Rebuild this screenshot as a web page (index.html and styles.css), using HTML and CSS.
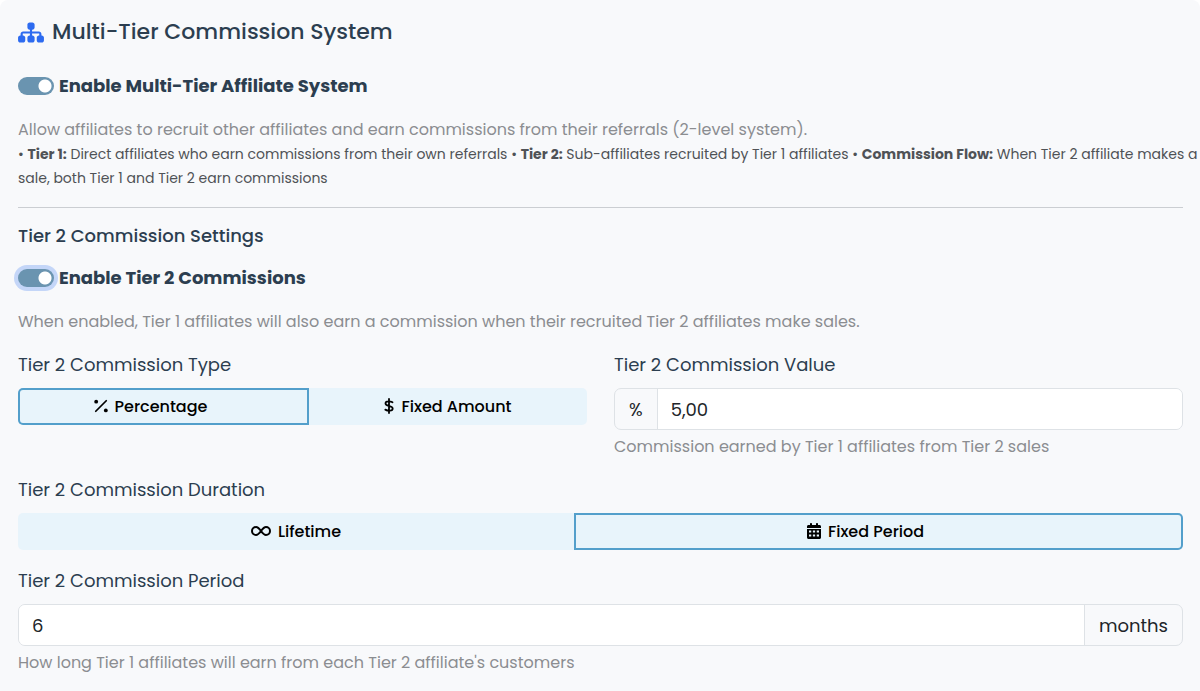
FILE: index.html
```html
<!DOCTYPE html>
<html lang="en">
<head>
    <meta charset="UTF-8">
    <meta name="viewport" content="width=device-width, initial-scale=1.0">
    <title>Multi-Tier Commission System</title>
    <link rel="stylesheet" href="styles.css">
</head>
<body>
    <form class="panel">
        <h1 class="panel-title">
            <svg class="icon icon-sitemap" viewBox="0 0 576 512" aria-hidden="true">
                <path fill="currentColor" d="M208 80c0-26.500 21.500-48 48-48h64c26.500 0 48 21.500 48 48v64c0 26.500-21.500 48-48 48h-8v40h152c30.900 0 56 25.100 56 56v32h8c26.500 0 48 21.500 48 48v64c0 26.500-21.500 48-48 48h-64c-26.500 0-48-21.500-48-48v-64c0-26.500 21.500-48 48-48h8v-32c0-4.400-3.600-8-8-8H312v40h8c26.500 0 48 21.500 48 48v64c0 26.500-21.500 48-48 48h-64c-26.500 0-48-21.500-48-48v-64c0-26.500 21.500-48 48-48h8v-40H112c-4.400 0-8 3.600-8 8v32h8c26.500 0 48 21.500 48 48v64c0 26.500-21.500 48-48 48H48c-26.500 0-48-21.500-48-48v-64c0-26.500 21.500-48 48-48h8v-32c0-30.900 25.100-56 56-56h152v-40h-8c-26.500 0-48-21.500-48-48z"/>
            </svg>
            Multi-Tier Commission System
        </h1>

        <div class="switch-row">
            <input class="switch" type="checkbox" id="enableMultiTier" checked>
            <label for="enableMultiTier">Enable Multi-Tier Affiliate System</label>
        </div>
        <p class="help">Allow affiliates to recruit other affiliates and earn commissions from their referrals (2-level system).</p>
        <p class="notes">
            • <strong>Tier 1:</strong> Direct affiliates who earn commissions from their own referrals
            • <strong>Tier 2:</strong> Sub-affiliates recruited by Tier 1 affiliates
            • <strong>Commission Flow:</strong> When Tier 2 affiliate makes a sale, both Tier 1 and Tier 2 earn commissions
        </p>

        <hr class="divider">

        <h2 class="section-title">Tier 2 Commission Settings</h2>
        <div class="switch-row">
            <input class="switch switch-focus" type="checkbox" id="enableTier2" checked>
            <label for="enableTier2">Enable Tier 2 Commissions</label>
        </div>
        <p class="help">When enabled, Tier 1 affiliates will also earn a commission when their recruited Tier 2 affiliates make sales.</p>

        <div class="row">
            <div class="field" role="radiogroup" aria-labelledby="typeLabel">
                <span class="field-label" id="typeLabel">Tier 2 Commission Type</span>
                <div class="btn-group">
                    <input class="btn-check" type="radio" name="type" id="typePercentage" checked>
                    <label class="btn" for="typePercentage">
                        <svg class="icon" viewBox="0 0 16 16" aria-hidden="true">
                            <circle cx="2.500" cy="3" r="2.200" fill="currentColor"/>
                            <circle cx="13.500" cy="13" r="2.200" fill="currentColor"/>
                            <path d="M2 14L14 2" stroke="currentColor" stroke-width="2" stroke-linecap="round"/>
                        </svg>
                        Percentage
                    </label>
                    <input class="btn-check" type="radio" name="type" id="typeFixed">
                    <label class="btn" for="typeFixed">
                        <svg class="icon icon-dollar" viewBox="0 0 10 16" aria-hidden="true">
                            <path d="M5 1v14M8.500 4.300C6.500 3.200 1.500 2.700 1.500 5.400c0 3 7.200 1.800 7.200 5 0 3-5 2.600-7.400 1.200" fill="none" stroke="currentColor" stroke-width="1.800" stroke-linecap="round" stroke-linejoin="round"/>
                        </svg>
                        Fixed Amount
                    </label>
                </div>
            </div>
            <div class="field">
                <label class="field-label" for="commissionValue">Tier 2 Commission Value</label>
                <div class="input-group">
                    <span class="addon">%</span>
                    <input class="control" type="text" id="commissionValue" value="5,00">
                </div>
                <p class="hint">Commission earned by Tier 1 affiliates from Tier 2 sales</p>
            </div>
        </div>

        <div class="field" role="radiogroup" aria-labelledby="durationLabel">
            <span class="field-label" id="durationLabel">Tier 2 Commission Duration</span>
            <div class="btn-group">
                <input class="btn-check" type="radio" name="duration" id="durationLifetime">
                <label class="btn" for="durationLifetime">
                    <svg class="icon icon-infinity" viewBox="0 0 20 16" aria-hidden="true">
                        <path d="M10 8C8.200 5.500 7 4 5 4a4 4 0 0 0 0 8c2 0 3.200-1.500 5-4s3-4 5-4a4 4 0 0 1 0 8c-2 0-3.200-1.500-5-4z" fill="none" stroke="currentColor" stroke-width="2" stroke-linejoin="round"/>
                    </svg>
                    Lifetime
                </label>
                <input class="btn-check" type="radio" name="duration" id="durationFixed" checked>
                <label class="btn" for="durationFixed">
                    <svg class="icon" viewBox="0 0 448 512" aria-hidden="true">
                        <path fill="currentColor" fill-rule="evenodd" d="M128 0c17.700 0 32 14.300 32 32v32h128V32c0-17.700 14.300-32 32-32s32 14.300 32 32v32h48c26.500 0 48 21.500 48 48v48H0v-48c0-26.500 21.500-48 48-48h48V32c0-17.700 14.300-32 32-32zM0 192h448v272c0 26.500-21.500 48-48 48H48c-26.500 0-48-21.500-48-48zM64 240v64h72v-64zM188 240v64h72v-64zM312 240v64h72v-64zM64 368v64h72v-64zM188 368v64h72v-64zM312 368v64h72v-64z"/>
                    </svg>
                    Fixed Period
                </label>
            </div>
        </div>

        <div class="field">
            <label class="field-label" for="commissionPeriod">Tier 2 Commission Period</label>
            <div class="input-group">
                <input class="control" type="text" id="commissionPeriod" value="6">
                <span class="addon">months</span>
            </div>
            <p class="hint">How long Tier 1 affiliates will earn from each Tier 2 affiliate's customers</p>
        </div>
    </form>
</body>
</html>
```
FILE: styles.css
```css
* {
    box-sizing: border-box;
}
body {
    margin: 0;
    background: #fff;
    color: #2c3e50;
    font-family: Poppins, Inter, sans-serif;
    font-size: 18px;
}
h1, h2, p {
    margin: 0;
}
.panel {
    padding: 16px 17px 12px 18px;
    background: #f8f9fb;
    border-radius: 8px;
}
.panel-title {
    display: flex;
    align-items: center;
    gap: 8px;
    margin-bottom: 24px;
    font-size: 22px;
    font-weight: 500;
    line-height: 32px;
}
.icon {
    flex: none;
    width: 14px;
    height: 16px;
}
.icon-sitemap {
    width: 26px;
    height: 23px;
    color: #2d6bf0;
}
.icon-dollar {
    width: 10px;
}
.icon-infinity {
    width: 20px;
}
.switch-row {
    display: flex;
    align-items: center;
    gap: 5px;
    margin-bottom: 18px;
    font-weight: 700;
    line-height: 28px;
}
.switch {
    appearance: none;
    width: 36px;
    height: 18px;
    margin: 0;
    border-radius: 9px;
    background: radial-gradient(circle at 27px 9px, #fff 6px, transparent 7px) #6a94b0;
}
.switch-focus {
    box-shadow: 0 0 0 4px #c4d6f8;
}
.help {
    color: #8b8d91;
    font-size: 16px;
    line-height: 24px;
}
/* runs into the panel padding so the first line stays whole */
.notes {
    margin-right: -17px;
    color: #4f5256;
    font-size: 14px;
    line-height: 24px;
}
.divider {
    margin: 17px 0 14px;
    border: 0;
    border-top: 1px solid #cbced2;
}
.section-title {
    margin-bottom: 14px;
    font-size: 18px;
    font-weight: 500;
    line-height: 28px;
}
.row {
    display: flex;
    gap: 27px;
    margin-top: 17px;
}
.row .field {
    flex: 1;
}
.field {
    margin-bottom: 17px;
}
.field-label {
    display: block;
    margin-bottom: 9px;
    line-height: 28px;
}
.btn-group {
    display: flex;
    position: relative;
}
.btn-check {
    position: absolute;
    opacity: 0;
    pointer-events: none;
}
.btn {
    display: flex;
    flex: 1 1 auto;
    align-items: center;
    justify-content: center;
    gap: 7px;
    height: 37px;
    padding-bottom: 1px;
    background: #e8f4fb;
    color: #000;
    font-size: 16px;
    font-weight: 500;
    cursor: pointer;
}
.btn:first-of-type {
    border-radius: 5px 0 0 5px;
}
.btn:last-of-type {
    border-radius: 0 5px 5px 0;
}
.btn-check:checked + .btn {
    padding-right: 26px;
    box-shadow: inset 0 0 0 2px #539fcb;
}
.input-group {
    display: flex;
    height: 42px;
    border: 1px solid #dee2e6;
    border-radius: 7px;
    overflow: hidden;
    color: #212529;
}
.addon {
    display: flex;
    align-items: center;
    padding: 0 14px;
}
.control {
    flex: 1;
    min-width: 0;
    padding: 0 13px;
    border: 0;
    background: #fff;
    color: inherit;
    font: inherit;
}
.addon + .control {
    border-left: 1px solid #dee2e6;
}
.control + .addon {
    border-left: 1px solid #dee2e6;
}
.hint {
    margin-top: 5px;
    color: #8b8d91;
    font-size: 16px;
    line-height: 24px;
}
```
